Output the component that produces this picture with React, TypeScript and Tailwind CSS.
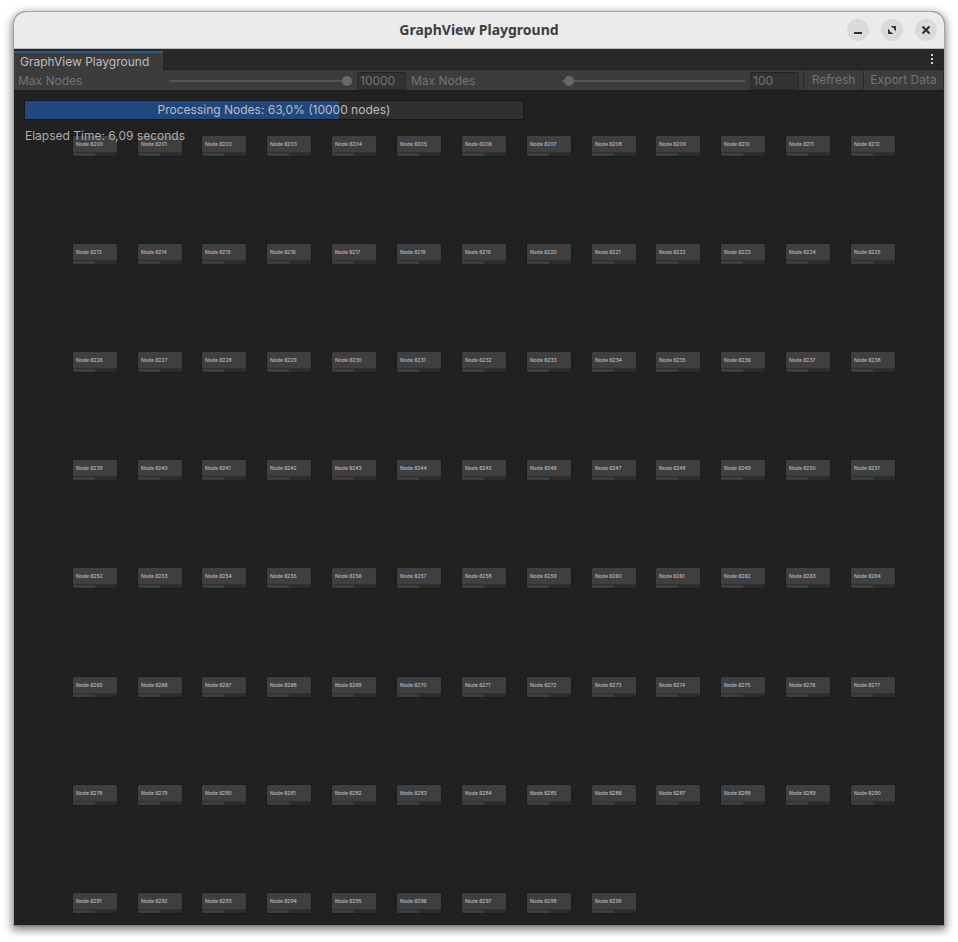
import { useState } from "react";

const COLUMNS = 13;
const FIRST_NODE = 6200;
const NODE_COUNT = 100;

const nodes = Array.from({ length: NODE_COUNT }, (_, i) => ({
  id: FIRST_NODE + i,
  left: Math.round(58.7 + (i % COLUMNS) * 64.85),
  top: Math.round(45 + Math.floor(i / COLUMNS) * 108.1),
}));

function GraphNode({ id, left, top }: { id: number; left: number; top: number }) {
  return (
    <div
      className="absolute flex h-5 w-11 flex-col overflow-hidden rounded-[1px] bg-[#3f3f3f] outline outline-[#1d1d1d]"
      style={{ left, top }}
    >
      <span className="flex-1 px-[3px] text-[5px] leading-4 font-medium whitespace-nowrap text-[#bdbdbd]">
        Node {id}
      </span>
      <span className="flex h-1 border-t border-[#303030]">
        <span className="flex-1 bg-[#3d3d3d]" />
        <span className="flex-1 bg-[#2c2c2c]" />
      </span>
    </div>
  );
}

function SliderField({ id, label, initial }: { id: string; label: string; initial: number }) {
  const [value, setValue] = useState(initial);
  return (
    <div className="flex min-w-0 flex-1 items-center">
      <label htmlFor={id} className="w-[151px] shrink-0 leading-5">
        {label}
      </label>
      <input
        id={id}
        type="range"
        min={0}
        max={10000}
        value={value}
        onChange={(e) => setValue(Number(e.target.value))}
        className="h-5 min-w-0 flex-1 appearance-none bg-transparent [&::-webkit-slider-runnable-track]:h-[2px] [&::-webkit-slider-runnable-track]:bg-[#555555] [&::-webkit-slider-thumb]:-mt-1 [&::-webkit-slider-thumb]:size-[10px] [&::-webkit-slider-thumb]:appearance-none [&::-webkit-slider-thumb]:rounded-full [&::-webkit-slider-thumb]:bg-[#696969]"
      />
      <input
        type="text"
        aria-label={`${label} value`}
        value={value}
        onChange={(e) => setValue(Number(e.target.value) || 0)}
        className="ml-[5px] h-[18px] w-[49px] shrink-0 rounded-[3px] border border-[#2b2b2b] border-t-[#222222] bg-[#323232] px-[2px] text-[#737373] outline-none"
      />
    </div>
  );
}

const windowButton = "flex size-[22px] items-center justify-center rounded-full bg-[#dadada] text-[#333333]";

export default function App() {
  return (
    <div className="flex min-h-screen flex-col bg-white px-[13px] pt-[11px] pb-4 font-['Inter',sans-serif] text-[12px]">
      <div className="flex flex-1 flex-col overflow-hidden rounded-t-[13px] border border-[#a4a6a5] border-b-[#7d7d7d] bg-[#212121] shadow-[0_3px_9px_1px_rgba(0,0,0,0.5)]">
        <header className="grid h-[37px] grid-cols-[1fr_auto_1fr] items-center border-b border-[#b9bcbb] bg-[#ebebeb]">
          <h1 className="col-start-2 mb-[2px] font-['Noto_Sans',sans-serif] text-[14px] font-bold text-[#3d3d3d]">
            GraphView Playground
          </h1>
          <div className="flex justify-end gap-3 pr-[7px]">
            <button aria-label="Minimize" className={windowButton}>
              <svg width="16" height="16" viewBox="0 0 16 16" fill="currentColor">
                <path d="M4 10h8v2H4z" />
              </svg>
            </button>
            <button aria-label="Restore" className={windowButton}>
              <svg width="16" height="16" viewBox="0 0 16 16" fill="currentColor">
                <path d="M6.800 4H12v5.200L10 7.200V6H8.800zM4 6.800L6 8.800V10h1.200l2 2H4z" />
              </svg>
            </button>
            <button aria-label="Close" className={windowButton}>
              <svg width="16" height="16" viewBox="0 0 16 16" stroke="currentColor" strokeWidth="2.200" fill="none">
                <path d="M4.500 4.500l7 7M11.500 4.500l-7 7" />
              </svg>
            </button>
          </div>
        </header>

        <div className="flex h-[21px] items-end justify-between bg-[#282828] shadow-[inset_0_-1px_0_#202020]">
          <div role="tablist">
            <button
              role="tab"
              aria-selected="true"
              className="block h-[19px] w-[149px] border-t-2 border-[#2c5d87] bg-[#3c3c3c] pl-[6px] text-left leading-[17px] text-[#bdbdbd]"
            >
              GraphView Playground
            </button>
          </div>
          <button aria-label="Window options" className="flex h-5 w-6 items-center justify-center text-[#d0d0d0]">
            <svg width="4" height="12" viewBox="0 0 4 12" fill="currentColor">
              <path d="M1 0h2v2H1zM1 4h2v2H1zM1 8h2v2H1z" />
            </svg>
          </button>
        </div>

        <div className="flex h-5 items-center bg-[#3c3c3c] text-[#737373]">
          <div className="flex min-w-0 flex-1 gap-[5px] px-1 pt-[2px]">
            <SliderField id="max-nodes" label="Max Nodes" initial={10000} />
            <SliderField id="max-nodes-batch" label="Max Nodes" initial={100} />
          </div>
          <button className="h-5 w-[60px] border-l border-[#2b2b2b] leading-5">Refresh</button>
          <button className="h-5 w-[81px] border-x border-[#2b2b2b] leading-5">Export Data</button>
        </div>

        <main className="relative flex-1 overflow-hidden border-t border-[#1c1c1c]">
          {nodes.map((node) => (
            <GraphNode key={node.id} {...node} />
          ))}
          <div className="relative px-[10px] pt-[9px] text-[#acacac]">
            <div
              role="progressbar"
              aria-label="Processing Nodes"
              aria-valuenow={63}
              aria-valuemin={0}
              aria-valuemax={100}
              className="grid h-5 w-full max-w-[500px] border border-[#171717] bg-[#303030]"
            >
              <div className="col-start-1 row-start-1 w-[63%] bg-[#21477f]" />
              <div className="col-start-1 row-start-1 text-center leading-[18px] text-[#bcbcbc]">
                Processing Nodes: 63,0% (10000 nodes)
              </div>
            </div>
            <p className="mt-[6px] pl-px leading-5">Elapsed Time: 6,09 seconds</p>
          </div>
        </main>
      </div>
    </div>
  );
}
